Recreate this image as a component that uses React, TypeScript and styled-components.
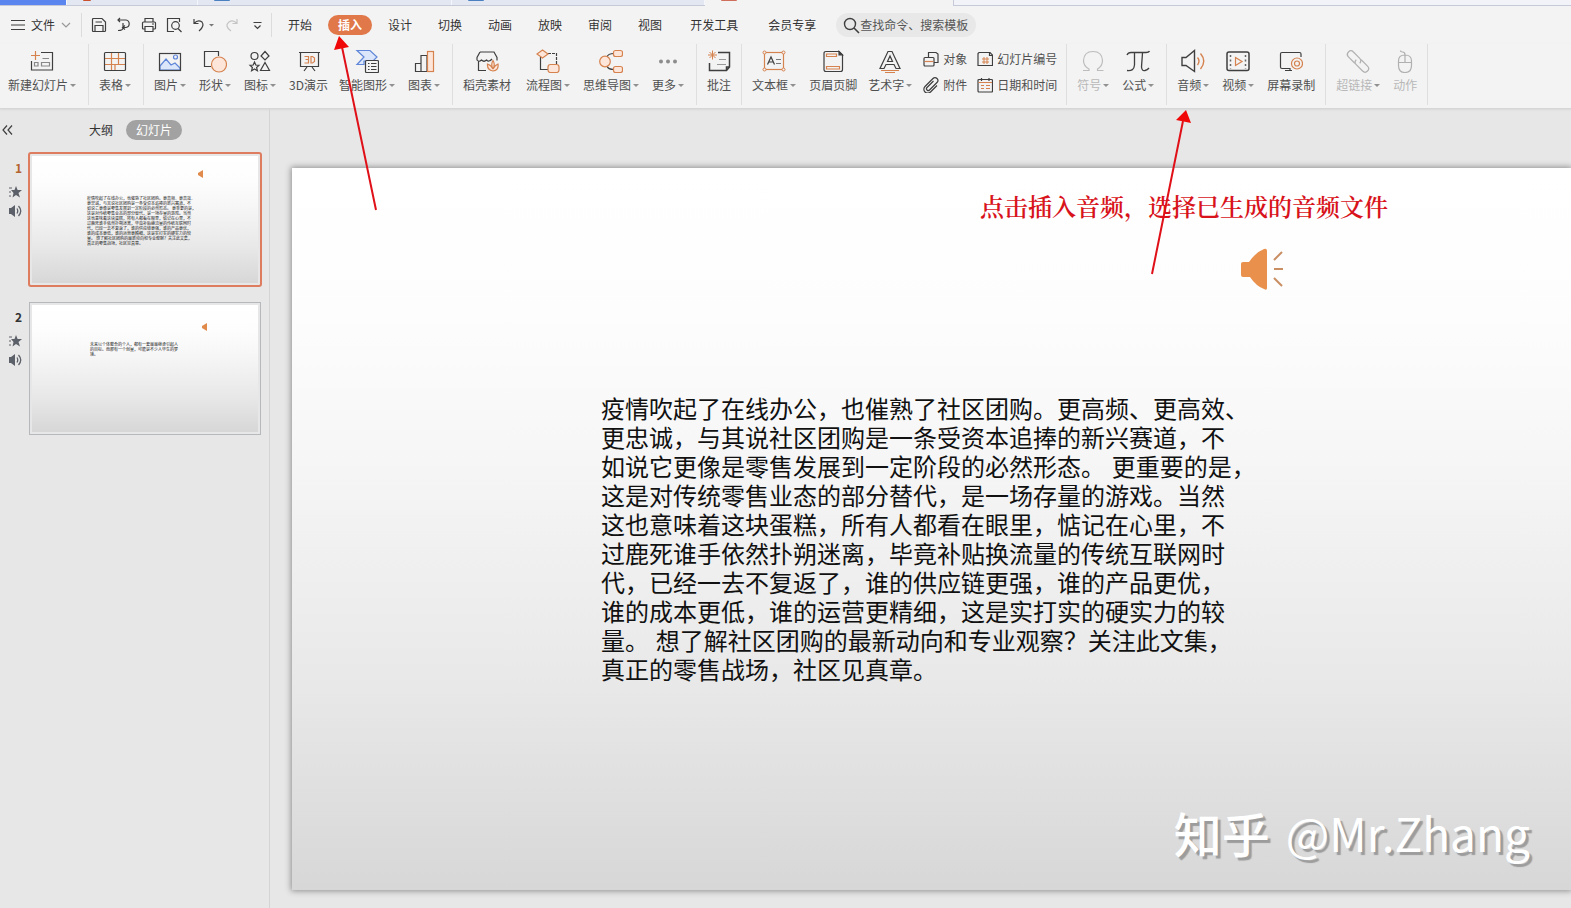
import React from "react";
import styled, { createGlobalStyle } from "styled-components";

const GlobalStyle = createGlobalStyle`
  * { box-sizing: border-box; }
  body {
    margin: 0;
    background: #e7e7e7;
    color: #444;
    font: 12px/16px "Noto Sans CJK SC", sans-serif;
    overflow-x: hidden;
  }
  button { font: inherit; color: inherit; background: none; border: 0; padding: 0; cursor: pointer; }
  svg { display: block; flex: none; }
`;

const INK = "#3f3f3f";
const ORANGE = "#d5824f";
const PEACH = "#fde6d9";
const BLUE = "#5f86d8";

const Page = styled.div`
  position: relative;
  display: flex;
  flex-direction: column;
  min-height: 100vh;
  overflow: hidden;
`;

/* document tabs */
const TabStrip = styled.nav`
  display: flex;
  height: 6px;
  background: #f2f3f9;
  border-bottom: 1px solid #c6cad8;
`;
const DocTab = styled.div<{ $w: number; $bg: string; $active?: boolean }>`
  width: ${(p) => p.$w}px;
  height: ${(p) => (p.$active ? 6 : 5)}px;
  padding-left: 16px;
  background: ${(p) => p.$bg};
  border-right: 1px solid ${(p) => (p.$active ? "#c6cad8" : "#f4f6fb")};
`;
const DocMark = styled.span<{ $c: string; $w: number }>`
  display: block;
  width: ${(p) => p.$w}px;
  height: 1px;
  border-radius: 0 0 4px 4px;
  background: ${(p) => p.$c};
`;

/* menu row */
const MenuBar = styled.div`
  display: flex;
  align-items: center;
  height: 38px;
  background: #f3f3f3;
`;
const FileButton = styled.button`
  display: flex;
  align-items: center;
  gap: 6px;
  width: 82px;
  height: 24px;
  padding-left: 11px;
  border-right: 1px solid #dcdcdc;
  color: #333;
`;
const QuickTools = styled.div`
  display: flex;
  align-items: center;
  gap: 9px;
  width: 190px;
  height: 24px;
  padding-left: 9px;
  border-right: 1px solid #dcdcdc;
`;
const MenuTabs = styled.nav`
  display: flex;
  align-items: center;
  padding-left: 3px;
`;
const MenuTab = styled.button<{ $wide?: boolean; $active?: boolean }>`
  height: 20px;
  margin: 0 ${(p) => (p.$active ? 3 : 0)}px;
  padding: 0 ${(p) => (p.$wide ? 15 : p.$active ? 10 : 13)}px;
  border-radius: 10px;
  white-space: nowrap;
  color: ${(p) => (p.$active ? "#fff" : "#333")};
  background: ${(p) => (p.$active ? "#e0784a" : "none")};
  font-weight: ${(p) => (p.$active ? 700 : 400)};
`;
const SearchBox = styled.label`
  display: flex;
  align-items: center;
  width: 140px;
  height: 24px;
  margin-left: 5px;
  padding-left: 7px;
  border-radius: 12px;
  background: #e8e8e8;
`;
const SearchInput = styled.input`
  width: 116px;
  border: 0;
  padding: 0;
  background: none;
  outline: none;
  font: inherit;
  color: #555;
  &::placeholder { color: #555; opacity: 1; }
`;

/* ribbon */
const Ribbon = styled.div`
  display: flex;
  height: 65px;
  background: #f3f3f3;
  border-bottom: 1px solid #d6d6d6;
  box-shadow: 0 1px 2px #d8d8d8;
`;
const Group = styled.div<{ $first?: boolean }>`
  display: flex;
  height: 61px;
  padding: 0 5px 0 ${(p) => (p.$first ? 2 : 4)}px;
  border-right: 1px solid #dfdfdf;
`;
const Tool = styled.button<{ $caret?: boolean; $disabled?: boolean; $roomy?: boolean }>`
  display: flex;
  flex-direction: column;
  align-items: center;
  gap: 4px;
  padding: 5px ${(p) => (p.$caret ? 7 : p.$roomy ? 9 : 5)}px 0 6px;
  white-space: nowrap;
  color: ${(p) => (p.$disabled ? "#b8b8b8" : "#505050")};
`;
const ToolLabel = styled.span`
  display: flex;
  align-items: center;
`;
const Caret = styled.i`
  margin-left: 2px;
  border: 3px solid transparent;
  border-top-color: #909090;
  border-bottom: 0;
`;
const SmallGrid = styled.div`
  display: grid;
  grid-template-columns: 54px 84px;
  grid-auto-rows: 26px;
  padding: 2px 0 0 4px;
`;
const SmallTool = styled.button`
  display: flex;
  align-items: center;
  gap: 4px;
  white-space: nowrap;
  color: #505050;
`;

/* work area */
const Workspace = styled.main`
  display: flex;
  flex: 1;
`;
const Sidebar = styled.aside`
  flex: none;
  width: 270px;
  border-right: 1px solid #d4d4d4;
`;
const SideHeader = styled.div`
  display: flex;
  align-items: center;
  height: 20px;
  margin-top: 11px;
  color: #333;
`;
const CollapseButton = styled.button`
  width: 76px;
  padding-left: 2px;
`;
const SideTab = styled.button<{ $active?: boolean }>`
  height: 20px;
  padding: 0 ${(p) => (p.$active ? 10 : 13)}px;
  border-radius: 10px;
  color: ${(p) => (p.$active ? "#fff" : "#333")};
  background: ${(p) => (p.$active ? "#a2a2a2" : "none")};
`;
const ThumbList = styled.ol`
  display: flex;
  flex-direction: column;
  gap: 14px;
  margin: 12px 0 0;
  padding: 0;
  list-style: none;
`;
const ThumbRow = styled.li`
  display: flex;
`;
const ThumbMeta = styled.div<{ $active?: boolean }>`
  display: flex;
  flex-direction: column;
  align-items: flex-end;
  gap: 5px;
  width: 28px;
  padding: 8px 6px 0 0;
  color: ${(p) => (p.$active ? "#b4632f" : "#333")};
`;
const ThumbNumber = styled.span`
  padding-bottom: 4px;
  font-weight: 700;
`;
const ThumbFrame = styled.button<{ $active?: boolean }>`
  width: ${(p) => (p.$active ? 234 : 232)}px;
  height: ${(p) => (p.$active ? 135 : 133)}px;
  margin: ${(p) => (p.$active ? 0 : 1)}px;
  padding: 2px;
  text-align: left;
  border: ${(p) => (p.$active ? "2px solid #de7c5f" : "1px solid #b6b9bb")};
  border-radius: ${(p) => (p.$active ? 3 : 0)}px;
`;
const slideFill = `linear-gradient(#fff 0%, #fdfdfd 20%, #f7f7f7 38%, #e8e8e8 72%, #d7d7d7 100%)`;
const ThumbSlide = styled.span`
  position: relative;
  display: block;
  height: 100%;
  background: ${slideFill};
`;
const ThumbText = styled.span<{ $x: number; $y: number }>`
  position: absolute;
  left: ${(p) => p.$x}px;
  top: ${(p) => p.$y}px;
  color: #222;
  font-size: 4px;
  line-height: 5px;
  white-space: nowrap;
`;
const ThumbSound = styled.span<{ $x: number; $y: number }>`
  position: absolute;
  left: ${(p) => p.$x}px;
  top: ${(p) => p.$y}px;
`;
const Line = styled.span`
  display: block;
`;

const Stage = styled.section`
  display: flex;
  flex: 1;
  min-width: 0;
  padding: 59px 0 18px 22px;
`;
const Slide = styled.article`
  position: relative;
  flex: 1;
  background: ${slideFill};
  box-shadow: 0 0 6px 1px #8f8f8f;
`;
const SlideText = styled.p`
  position: absolute;
  left: 309px;
  top: 227px;
  margin: 0;
  color: #111;
  font: 24px/29px "Liberation Sans", "Noto Sans CJK SC", sans-serif;
  white-space: nowrap;
`;
const Note = styled.p`
  position: absolute;
  left: 688px;
  top: 22px;
  margin: 0;
  color: #d8131b;
  font: 600 24px/32px "Noto Serif CJK SC", "SimSun", "Noto Sans CJK SC", serif;
  white-space: nowrap;
`;
const SlideSound = styled.div`
  position: absolute;
  left: 948px;
  top: 80px;
`;
const Watermark = styled.p`
  position: absolute;
  right: 41px;
  bottom: 26px;
  display: flex;
  gap: 16px;
  margin: 0;
  color: #fff;
  font-size: 46px;
  line-height: 64px;
  text-shadow: 3px 3px 1px #9c9c9c;
  white-space: nowrap;
`;
const Brand = styled.span`
  font-size: 48px;
  font-weight: 500;
`;
const Arrows = styled.svg`
  position: absolute;
  left: 0;
  top: 0;
  pointer-events: none;
`;

const Icon = ({ w = 24, h = 24, c = INK, children }: { w?: number; h?: number; c?: string; children: React.ReactNode }) => (
  <svg width={w} height={h} viewBox={`0 0 ${w} ${h}`} fill="none" stroke={c} strokeWidth="1.2" aria-hidden="true">
    {children}
  </svg>
);

const icons: Record<string, React.ReactNode> = {
  newSlide: <Icon><path d="M11 3.500H22.500V21H1.500V12"/><path d="M5.500 2V11M1 6.500H10" stroke={ORANGE}/><path d="M12.500 9.500H19M4.500 13.500H8V17H4.500ZM11.500 13.500H19.500V17H11.500Z" stroke="#888"/></Icon>,
  table: <Icon><path d="M2 9.500H22M2 15.500H22M8.500 9.500V21M15.500 4V15.500M12 15.500V21M8.500 4V9" stroke={ORANGE}/><rect x="1.500" y="3.500" width="21" height="18" rx="1"/></Icon>,
  picture: <Icon><path d="M2 17L8 10L13 16L17 14L22 19V21H2Z" fill="#dbe6fb" stroke={BLUE}/><circle cx="17.500" cy="8" r="2" stroke={BLUE}/><rect x="1.500" y="4.500" width="21" height="17"/></Icon>,
  shape: <Icon><path d="M8 17.500H1.500V2.500H15.500V7"/><circle cx="16" cy="15.500" r="7.500" fill={PEACH} stroke={ORANGE}/></Icon>,
  iconSet: <Icon><circle cx="6.500" cy="7" r="3.500"/><path d="M17 2.500L21 7L17 11L13 7ZM17 13.500L21.500 21.500H12.500ZM6.500 13L7.800 16L11 16.300L8.600 18.500L9.400 21.700L6.500 20L3.600 21.700L4.400 18.500L2 16.300L5.200 16Z"/></Icon>,
  board: <Icon><path d="M2 3.500H23M3.500 4V17.500H21.500V4M10 18L7 22M15 18L18 22"/><path d="M7.500 7.500H11.500V14H7.500M8.500 10.500H11.500M14 7.500H15.500L17.500 9V12.500L15.500 14H14Z" stroke={ORANGE}/></Icon>,
  smart: <Icon><path d="M2 1.500H15L22 8L18 12H9L9 15.500H2L9 8Z" fill="#dbe6fb" stroke={BLUE}/><rect x="10.500" y="11.500" width="13" height="12" rx="1" fill="#f3f3f3"/><path d="M13 14.500H14.500M16 14.500H21.500M13 17.500H14.500M16 17.500H21.500M13 20.500H14.500M16 20.500H21.500" strokeWidth="1"/></Icon>,
  chart: <Icon><path d="M3.500 14.500H9V22.500H3.500ZM9 6.500H15V22.500H9Z"/><rect x="15.500" y="2.500" width="6" height="20" fill={PEACH} stroke={ORANGE}/></Icon>,
  store: <Icon><path d="M11 21.500H3.500V12M5 3H19L22 8.500V11.500M5 3L2 8.500V11Q4 13.500 6.500 11Q9 13.500 11.500 11Q14 13.500 17 10"/><path d="M18 22Q12 21 12.500 15Q16 16 18 20Q15.500 15 18 11.500Q20.500 15 18 20Q20 16 23 15Q24 21 18 22Z" fill={PEACH} stroke={ORANGE}/></Icon>,
  flow: <Icon><path d="M4.500 8V20.500H12"/><path d="M12 4.500H20.500V15" strokeDasharray="3 1"/><path d="M6.500 1L12 5L6.500 9L1 5Z" fill={PEACH} stroke={ORANGE}/><rect x="12" y="15.500" width="11" height="8" rx="2.500" fill={PEACH} stroke={ORANGE}/></Icon>,
  mind: <Icon><path d="M8 8Q9 4.500 15 4.500M8 17Q9 20.500 15 20.500"/><circle cx="6" cy="12.500" r="5.300" fill={PEACH} stroke={ORANGE}/><rect x="14.500" y="1.500" width="9" height="6" rx="2" fill={PEACH} stroke={ORANGE}/><rect x="14.500" y="17.500" width="9" height="6" rx="2" fill={PEACH} stroke={ORANGE}/></Icon>,
  more: <Icon c="none"><g fill="#8c8c8c"><circle cx="5" cy="12.500" r="2"/><circle cx="12" cy="12.500" r="2"/><circle cx="19" cy="12.500" r="2"/></g></Icon>,
  comment: <Icon><path d="M11 3.500H22.500V18L19.500 21.500H2.500V14M19.500 21V18H22" strokeWidth="1.500"/><path d="M12 10.500H19M10 15.500H19" stroke="#999"/><path d="M5.500 1.500V10.500M1 6H10M2.500 3L8.500 9M8.500 3L2.500 9" stroke={ORANGE} strokeWidth="1"/></Icon>,
  textbox: <Icon><rect x="2.500" y="3.500" width="19" height="17" stroke={ORANGE}/><g fill="#f3f3f3" stroke={ORANGE} strokeWidth="1"><circle cx="2.500" cy="3.500" r="1.500"/><circle cx="21.500" cy="3.500" r="1.500"/><circle cx="2.500" cy="20.500" r="1.500"/><circle cx="21.500" cy="20.500" r="1.500"/></g><path d="M5.500 15.500L9 8L12.500 15.500M7 13H11"/><path d="M14 10.500H19M14 14.500H19" stroke="#777"/></Icon>,
  header: <Icon><path d="M5 2.500H18L21.500 6V20.500Q21.500 22.500 19.500 22.500H5Q3 22.500 3 20.500V4.500Q3 2.500 5 2.500Z"/><path d="M18 2.500V6H21.500Z" fill={INK}/><path d="M5.500 5H15.500V7.500H5.500ZM5.500 17.500H18.500V20H5.500Z" stroke={ORANGE}/></Icon>,
  wordart: <Icon><path d="M10 2.500H14L22 19.500H18L16 15.500H8L6 19.500H2ZM12 7L9.500 12.500H14.500Z"/><path d="M3 21.500H21M7 23.500H17" stroke={ORANGE}/></Icon>,
  omega: <Icon c="#bcbcbc"><path d="M2 21.500H8V20Q2.500 17 2.500 11.500Q3 2.500 12 2.500Q21 2.500 21.500 11.500Q21.500 17 16.500 20V21.500H22.500"/></Icon>,
  pi: <Icon><path d="M1 6Q2 3.500 5 3.500H20Q23 3.500 23.500 2M8.500 4V16Q8 22.500 1 21.500M16.500 4L15.500 18Q16 22.500 19 21.500Q21.500 21 23 19" strokeWidth="1.300"/></Icon>,
  audio: <Icon><path d="M1 8.500H5L13.500 1.500V22.500L5 16.500H1Z" strokeWidth="1.400"/><path d="M16.500 8.500Q19.500 12 16.500 16M19.500 4.500Q26 12 19.500 20" stroke={ORANGE} strokeWidth="1.400"/></Icon>,
  video: <Icon><rect x="1" y="3" width="22" height="18.500" rx="2" strokeWidth="1.500"/><path d="M4.500 6V20M19.500 6V20" stroke="#666" strokeWidth="1.500" strokeDasharray="2 2.500"/><path d="M9.500 8.500L16 12.500L9.500 16.500Z" stroke={ORANGE}/></Icon>,
  record: <Icon><path d="M11 19.500H3Q1.500 19.500 1.500 18V5Q1.500 3.500 3 3.500H20.500Q22 3.500 22 5V8M6 21.500H13M11 19V21"/><circle cx="18" cy="14.500" r="5.500" stroke={ORANGE}/><circle cx="18" cy="14.500" r="2.500" stroke={ORANGE}/></Icon>,
  link: <Icon c="#b0b0b0"><g transform="rotate(45 12 12.500)"><path d="M11 16H2A3.500 3.500 0 0 1 2 9H11A3.500 3.500 0 0 1 14.500 12.500"/><path d="M13 9H22A3.500 3.500 0 0 1 22 16H13A3.500 3.500 0 0 1 9.500 12.500"/></g></Icon>,
  mouse: <Icon c="#b0b0b0"><path d="M12 6Q18.500 6 18.500 12V16.500Q18.500 23.500 12 23.500Q5.500 23.500 5.500 16.500V12Q5.500 6 12 6ZM5.500 13.500H18.500M12 6V13.500M12 6Q12 3 9.500 3Q7.500 3 7.500 1.500"/></Icon>,
};

interface ToolDef { icon: string; label: string; caret?: boolean; disabled?: boolean; roomy?: boolean }
const ToolItem = ({ icon, label, caret, disabled, roomy }: ToolDef) => (
  <Tool type="button" $caret={caret} $disabled={disabled} $roomy={roomy}>
    {icons[icon]}
    <ToolLabel>{label}{caret && <Caret />}</ToolLabel>
  </Tool>
);
const groups: ToolDef[][] = [
  [{ icon: "newSlide", label: "新建幻灯片", caret: true }],
  [{ icon: "table", label: "表格", caret: true }],
  [
    { icon: "picture", label: "图片", caret: true },
    { icon: "shape", label: "形状", caret: true },
    { icon: "iconSet", label: "图标", caret: true },
    { icon: "board", label: "3D演示" },
    { icon: "smart", label: "智能图形", caret: true },
    { icon: "chart", label: "图表", caret: true },
  ],
  [
    { icon: "store", label: "稻壳素材", roomy: true },
    { icon: "flow", label: "流程图", caret: true },
    { icon: "mind", label: "思维导图", caret: true },
    { icon: "more", label: "更多", caret: true },
  ],
  [{ icon: "comment", label: "批注" }],
];
const textGroup: ToolDef[] = [
  { icon: "textbox", label: "文本框", caret: true },
  { icon: "header", label: "页眉页脚" },
  { icon: "wordart", label: "艺术字", caret: true },
];
const tailGroups: ToolDef[][] = [
  [
    { icon: "omega", label: "符号", caret: true, disabled: true },
    { icon: "pi", label: "公式", caret: true },
  ],
  [
    { icon: "audio", label: "音频", caret: true },
    { icon: "video", label: "视频", caret: true },
    { icon: "record", label: "屏幕录制" },
  ],
  [
    { icon: "link", label: "超链接", caret: true, disabled: true },
    { icon: "mouse", label: "动作", disabled: true },
  ],
];

const smallTools = [
  { label: "对象", icon: <Icon w={16} h={16}><path d="M5.500 6V1.500H13L15 3V11.500H11"/><rect x="1" y="6.500" width="10" height="8.500" rx="1"/><path d="M1.500 10.500H10.500" stroke={ORANGE}/></Icon> },
  { label: "幻灯片编号", icon: <Icon w={16} h={16}><path d="M2 1.500H13L15.500 4V14.500H1V2.500Z"/><path d="M12.500 1.500V4.500H15.500" /><path d="M7 6V13M10 6V13M5 8H12M5 11H12" stroke={ORANGE} strokeWidth="1"/></Icon> },
  { label: "附件", icon: <Icon w={16} h={16}><path d="M10.500 4L4 10.500A1.600 1.600 0 0 0 6.500 13L14 5.500A2.800 2.800 0 0 0 10 1.500L2 9.500A3.800 3.800 0 0 0 7.500 15L14 8.500"/></Icon> },
  { label: "日期和时间", icon: <Icon w={16} h={16}><rect x="1" y="2.500" width="14.500" height="12.500" rx="1"/><path d="M4.500 1V4M12 1V4" /><path d="M1.500 5.500H15M4 8.500H7M9 8.500H13M4 11.500H7M9 11.500H13" stroke={ORANGE}/></Icon> },
];

const quickIcons: [string, React.ReactNode][] = [
  ["保存", <Icon w={16} h={16}><path d="M1.500 2.500Q1.500 1.500 2.500 1.500H11L14.500 5V13.500Q14.500 14.500 13.500 14.500H2.500Q1.500 14.500 1.500 13.500ZM4 14V8.500H12V14M4.500 5H11"/></Icon>],
  ["输出", <Icon w={16} h={16}><path d="M2 3H10A3.800 3.800 0 0 1 10 10.500H6.500M7 6V11Q7 13.500 2 13.500M4 1L2 3L4 5M9 8.500L6.500 10.500L9 12.500"/></Icon>],
  ["打印", <Icon w={16} h={16}><path d="M4 5V1.500H12V5M4 12H2.500Q1.500 12 1.500 11V6Q1.500 5 2.500 5H13.500Q14.500 5 14.500 6V11Q14.500 12 13.500 12H12M4 9.500H12V14.500H4ZM11 7H13"/></Icon>],
  ["预览", <Icon w={16} h={16}><path d="M8 14.500H1.500V1.500H13.500V5"/><circle cx="9.500" cy="8.500" r="3.800"/><path d="M12 11.500L15.500 15"/></Icon>],
  ["撤销", <Icon w={24} h={16}><path d="M3 2V6.500H7.500M3 6.500Q7 2 11 5Q14 9 8 14"/><path d="M18 7H23L20.500 9.500Z" fill="#777" stroke="none"/></Icon>],
  ["重做", <Icon w={16} h={16} c="#c4c4c4"><path d="M13 2V6.500H8.500M13 6.500Q9 2 5 5Q0 9 7 14"/></Icon>],
  ["自定义", <Icon w={16} h={16}><path d="M4.500 5.500H12.500M5.500 8.500L8.500 11.500L11.500 8.500"/></Icon>],
];

const body = [
  "疫情吹起了在线办公，也催熟了社区团购。更高频、更高效、",
  "更忠诚，与其说社区团购是一条受资本追捧的新兴赛道，不",
  "如说它更像是零售发展到一定阶段的必然形态。 更重要的是，",
  "这是对传统零售业态的部分替代，是一场存量的游戏。当然",
  "这也意味着这块蛋糕，所有人都看在眼里，惦记在心里，不",
  "过鹿死谁手依然扑朔迷离，毕竟补贴换流量的传统互联网时",
  "代，已经一去不复返了，谁的供应链更强，谁的产品更优，",
  "谁的成本更低，谁的运营更精细，这是实打实的硬实力的较",
  "量。 想了解社区团购的最新动向和专业观察？关注此文集，",
  "真正的零售战场，社区见真章。",
];
const second = [
  "未来以个体整合的个人，都有一套最最继承引起人",
  "的目标。而那有一个创量，可能是不少人毕生的梦",
  "境。",
];

const SmallSound = () => (
  <svg width="6" height="8" viewBox="0 0 6 8" aria-hidden="true"><path d="M0 3L5 0V8L0 5Z" fill="#e08a4c" /></svg>
);

const Thumb = ({ n, active, lines, tx, ty, sx, sy }: { n: number; active?: boolean; lines: string[]; tx: number; ty: number; sx: number; sy: number }) => (
  <ThumbRow>
    <ThumbMeta $active={active}>
      <ThumbNumber>{n}</ThumbNumber>
      <svg width="14" height="14" viewBox="0 0 14 14" aria-hidden="true">
        <path d="M8 1L9.600 5H14L10.500 8L12 12.500L8 10L4.500 12.500L5.500 8L3 5H6.500Z" fill="#5c6068" />
        <path d="M1 3H4M1 7H3M1 11H3" stroke="#5c6068" />
      </svg>
      <svg width="14" height="14" viewBox="0 0 14 14" aria-hidden="true">
        <path d="M1 4H3L7 1V13L3 10H1Z" fill="#5c6068" />
        <path d="M9 4.500Q10.500 7 9 9.500M10.500 2Q15 7 10.500 12" fill="none" stroke="#5c6068" strokeWidth="1.300" />
      </svg>
    </ThumbMeta>
    <ThumbFrame type="button" $active={active} aria-label={`幻灯片 ${n}`}>
      <ThumbSlide>
        <ThumbText $x={tx} $y={ty}>{lines.map((l) => <Line key={l}>{l}</Line>)}</ThumbText>
        <ThumbSound $x={sx} $y={sy}><SmallSound /></ThumbSound>
      </ThumbSlide>
    </ThumbFrame>
  </ThumbRow>
);

export default function App() {
  return (
    <Page>
      <GlobalStyle />
      <TabStrip>
        <DocTab $w={67} $bg="#5b86f0" />
        <DocTab $w={131} $bg="#e2e7f2"><DocMark $c="#c8502c" $w={8} /></DocTab>
        <DocTab $w={254} $bg="#e2e7f2"><DocMark $c="#4a7fc0" $w={16} /></DocTab>
        <DocTab $w={253} $bg="#e2e7f2"><DocMark $c="#4a7fc0" $w={16} /></DocTab>
        <DocTab $w={249} $bg="#f3f3f3" $active><DocMark $c="#cf6f5b" $w={16} /></DocTab>
      </TabStrip>
      <MenuBar>
        <FileButton type="button">
          <Icon w={14} h={12}><path d="M0 1.500H14M0 6H14M0 10.500H14" /></Icon>
          文件
          <Icon w={10} h={8} c="#999"><path d="M1 2L5 6L9 2" /></Icon>
        </FileButton>
        <QuickTools>
          {quickIcons.map(([name, icon]) => <button key={name} type="button" aria-label={name}>{icon}</button>)}
        </QuickTools>
        <MenuTabs>
          <MenuTab>开始</MenuTab>
          <MenuTab $active>插入</MenuTab>
          <MenuTab>设计</MenuTab>
          <MenuTab>切换</MenuTab>
          <MenuTab>动画</MenuTab>
          <MenuTab>放映</MenuTab>
          <MenuTab>审阅</MenuTab>
          <MenuTab>视图</MenuTab>
          <MenuTab $wide>开发工具</MenuTab>
          <MenuTab $wide>会员专享</MenuTab>
        </MenuTabs>
        <SearchBox>
          <Icon w={17} h={17}><circle cx="7" cy="7" r="5.500" strokeWidth="1.400" /><path d="M11 11L16 16" strokeWidth="1.600" /></Icon>
          <SearchInput aria-label="搜索" placeholder="查找命令、搜索模板" />
        </SearchBox>
      </MenuBar>
      <Ribbon>
        {groups.map((g, i) => <Group key={i} $first={i === 0}>{g.map((t) => <ToolItem key={t.label} {...t} />)}</Group>)}
        <Group>
          {textGroup.map((t) => <ToolItem key={t.label} {...t} />)}
          <SmallGrid>
            {smallTools.map((t) => <SmallTool key={t.label} type="button">{t.icon}{t.label}</SmallTool>)}
          </SmallGrid>
        </Group>
        {tailGroups.map((g, i) => <Group key={i}>{g.map((t) => <ToolItem key={t.label} {...t} />)}</Group>)}
      </Ribbon>
      <Workspace>
        <Sidebar>
          <SideHeader>
            <CollapseButton type="button" aria-label="收起">
              <Icon w={11} h={12}><path d="M5 1.500L1 6L5 10.500M10 1.500L6 6L10 10.500" /></Icon>
            </CollapseButton>
            <SideTab type="button">大纲</SideTab>
            <SideTab type="button" $active>幻灯片</SideTab>
          </SideHeader>
          <ThumbList>
            <Thumb n={1} active lines={body} tx={55} ty={40} sx={166} sy={14} />
            <Thumb n={2} lines={second} tx={58} ty={37} sx={170} sy={18} />
          </ThumbList>
        </Sidebar>
        <Stage>
          <Slide>
            <Note>点击插入音频，选择已生成的音频文件</Note>
            <SlideSound>
              <svg width="44" height="44" viewBox="0 0 44 44" aria-hidden="true">
                <path d="M1 16Q1 14 3 14H9Q16 4 24 1Q27 0 27 3V40Q27 43 24 41Q16 38 10 29H3Q1 29 1 27Z" fill="#e8904c" />
                <path d="M34 12L42 4M34 21H43M34 30L42 38" stroke="#c98f63" strokeWidth="2" />
              </svg>
            </SlideSound>
            <SlideText>{body.map((l) => <Line key={l}>{l}</Line>)}</SlideText>
            <Watermark><Brand>知乎</Brand>@Mr.Zhang</Watermark>
          </Slide>
        </Stage>
      </Workspace>
      <Arrows width="1200" height="280" viewBox="0 0 1200 280" aria-hidden="true">
        <g stroke="#e01018" strokeWidth="2">
          <path d="M342 47L376 210M1183 121L1152 274" />
        </g>
        <path d="M339 36L334 50L349 47ZM1186 110L1176 120L1191 123Z" fill="#f00808" />
      </Arrows>
    </Page>
  );
}
